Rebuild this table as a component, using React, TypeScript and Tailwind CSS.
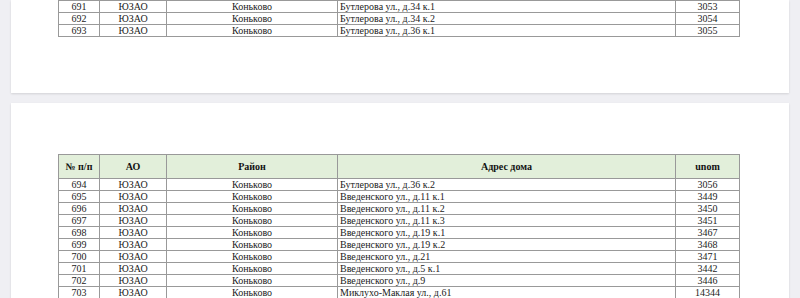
type Row = { n: number; ao: string; district: string; address: string; unom: number };

const firstPage: Row[] = [
  { n: 691, ao: 'ЮЗАО', district: 'Коньково', address: 'Бутлерова ул., д.34 к.1', unom: 3053 },
  { n: 692, ao: 'ЮЗАО', district: 'Коньково', address: 'Бутлерова ул., д.34 к.2', unom: 3054 },
  { n: 693, ao: 'ЮЗАО', district: 'Коньково', address: 'Бутлерова ул., д.36 к.1', unom: 3055 },
];

const secondPage: Row[] = [
  { n: 694, ao: 'ЮЗАО', district: 'Коньково', address: 'Бутлерова ул., д.36 к.2', unom: 3056 },
  { n: 695, ao: 'ЮЗАО', district: 'Коньково', address: 'Введенского ул., д.11 к.1', unom: 3449 },
  { n: 696, ao: 'ЮЗАО', district: 'Коньково', address: 'Введенского ул., д.11 к.2', unom: 3450 },
  { n: 697, ao: 'ЮЗАО', district: 'Коньково', address: 'Введенского ул., д.11 к.3', unom: 3451 },
  { n: 698, ao: 'ЮЗАО', district: 'Коньково', address: 'Введенского ул., д.19 к.1', unom: 3467 },
  { n: 699, ao: 'ЮЗАО', district: 'Коньково', address: 'Введенского ул., д.19 к.2', unom: 3468 },
  { n: 700, ao: 'ЮЗАО', district: 'Коньково', address: 'Введенского ул., д.21', unom: 3471 },
  { n: 701, ao: 'ЮЗАО', district: 'Коньково', address: 'Введенского ул., д.5 к.1', unom: 3442 },
  { n: 702, ao: 'ЮЗАО', district: 'Коньково', address: 'Введенского ул., д.9', unom: 3446 },
  { n: 703, ao: 'ЮЗАО', district: 'Коньково', address: 'Миклухо-Маклая ул., д.61', unom: 14344 },
];

const serif = "font-['Liberation_Serif','Times_New_Roman',serif]";
const cell = `border border-[#999] h-[12px] p-0 leading-[11px] text-[10px] text-[#222] ${serif}`;
const head = `border border-[#999] h-[24px] p-0 text-[10px] font-bold text-center text-[#111] ${serif}`;

function Cols() {
  return (
    <colgroup>
      <col className="w-[41px]" />
      <col className="w-[67px]" />
      <col className="w-[171px]" />
      <col className="w-[338px]" />
      <col className="w-[64px]" />
    </colgroup>
  );
}

function Rows({ rows }: { rows: Row[] }) {
  return (
    <>
      {rows.map((r) => (
        <tr key={r.n}>
          <td className={`${cell} text-center`}>{r.n}</td>
          <td className={`${cell} text-center`}>{r.ao}</td>
          <td className={`${cell} text-center`}>{r.district}</td>
          <td className={`${cell} text-left pl-[2px]`}>{r.address}</td>
          <td className={`${cell} text-center`}>{r.unom}</td>
        </tr>
      ))}
    </>
  );
}

export default function App() {
  return (
    <div className="h-[298px] overflow-hidden bg-[#efeff3]">
      {/* Page 1 (bottom part) */}
      <div className="mx-[11px] h-[93px] bg-white shadow-[0_1px_2px_rgba(0,0,0,0.12)]">
        <table className="ml-[47px] w-[681px] table-fixed border-collapse">
          <Cols />
          <tbody>
            <Rows rows={firstPage} />
          </tbody>
        </table>
      </div>

      {/* Page 2 (top part) */}
      <div className="mx-[11px] mt-[10px] h-[260px] bg-white pt-[51px] shadow-[0_1px_2px_rgba(0,0,0,0.12)]">
        <table className="ml-[47px] w-[681px] table-fixed border-collapse">
          <Cols />
          <thead>
            <tr className="bg-[#e2efda]">
              <th className={head}>№ п/п</th>
              <th className={head}>АО</th>
              <th className={head}>Район</th>
              <th className={head}>Адрес дома</th>
              <th className={head}>unom</th>
            </tr>
          </thead>
          <tbody>
            <Rows rows={secondPage} />
          </tbody>
        </table>
      </div>
    </div>
  );
}
